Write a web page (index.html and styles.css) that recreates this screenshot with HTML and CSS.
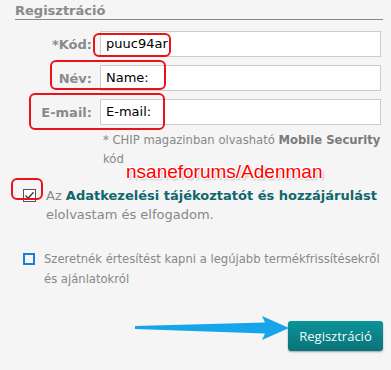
FILE: index.html
```html
<!DOCTYPE html>
<html lang="hu">
<head>
<meta charset="utf-8">
<link rel="stylesheet" href="styles.css">
</head>
<body>
<div class="panel">
  <h2 class="title">Regisztráció</h2>
  <div class="fields">
    <label class="lbl">*Kód:</label>
    <div class="inp">puuc94ar</div>
    <label class="lbl">Név:</label>
    <div class="inp">Name:</div>
    <label class="lbl">E-mail:</label>
    <div class="inp">E-mail:</div>
  </div>
  <p class="note">* CHIP magazinban olvasható <b>Mobile Security</b> kód</p>
  <div class="check first">
    <span class="box checked"><svg width="11" height="11" viewBox="0 0 11 11"><path d="M1.5 5.5 L4.2 8.2 L9.5 2.2" fill="none" stroke="#333" stroke-width="1.3"/></svg></span>
    <p>Az <b class="link">Adatkezelési tájékoztatót és hozzájárulást</b> elolvastam és elfogadom.</p>
  </div>
  <div class="check second">
    <span class="box blue"></span>
    <p>Szeretnék értesítést kapni a legújabb termékfrissítésekről és ajánlatokról</p>
  </div>
  <div class="actions">
    <button class="btn">Regisztráció</button>
  </div>

  <span class="mark m-kod"></span>
  <span class="mark m-nev"></span>
  <span class="mark m-email"></span>
  <span class="mark m-check"></span>
  <span class="watermark">nsaneforums/Adenman</span>
  <svg class="arrow" width="160" height="30" viewBox="0 0 160 30">
    <path d="M0 11 L130 7.5 L127 1 L154 13 L127 25 L130 18.5 L0 14 Z" fill="#16a5e8"/>
  </svg>
</div>
</body>
</html>
```
FILE: styles.css
```css
html, body {
  margin: 0;
  padding: 0;
  background: #f5f5f5;
}
body {
  width: 391px;
  height: 370px;
  overflow: hidden;
  font-family: "DejaVu Sans", Verdana, sans-serif;
}
.panel {
  position: relative;
  padding: 3px 8px 0 15px;
}
.title {
  margin: 0;
  width: 368px;
  font-size: 13px;
  font-weight: bold;
  color: #8a8a8a;
  line-height: 16px;
  padding-bottom: 0;
  border-bottom: 1px solid #8a8a8a;
}
.fields {
  display: grid;
  grid-template-columns: 77px 281px;
  column-gap: 8px;
  row-gap: 8px;
  margin-top: 11px;
  align-items: center;
}
.lbl {
  text-align: right;
  font-size: 13px;
  font-weight: bold;
  color: #8a8a8a;
}
.inp {
  box-sizing: border-box;
  height: 26px;
  border: 1px solid #cccccc;
  background: #fff;
  font-size: 13px;
  color: #000;
  padding: 0 5px;
  line-height: 24px;
}
.note {
  margin: 6px 0 0 88px;
  font-size: 11.6px;
  line-height: 19px;
  color: #888;
  width: 290px;
}
.note b { color: #7a7a7a; }
.check {
  display: flex;
  align-items: flex-start;
  color: #888;
}
.check p { margin: 0; }
.first { margin-top: 17px; margin-left: 8px; }
.first p {
  font-size: 13px;
  line-height: 19px;
  margin-left: 10px;
  width: 340px;
}
.link { color: #11666e; }
.second { margin-top: 25px; margin-left: 8px; }
.second p {
  flex: none;
  font-size: 11.6px;
  line-height: 20px;
  margin-left: 9px;
  width: 345px;
}
.box {
  box-sizing: border-box;
  flex: none;
  width: 13px;
  height: 13px;
  margin-top: 3px;
  display: flex;
  align-items: center;
  justify-content: center;
}
.checked { border: 1px solid #555; background: #fff; }
.blue { border: 2px solid #1b7fd4; width: 12px; height: 12px; margin-top: 4px; }
.actions {
  display: flex;
  justify-content: flex-end;
  margin-top: 32px;
  width: 368px;
}
.btn {
  width: 95px;
  height: 30px;
  border: none;
  border-radius: 3px;
  background: linear-gradient(#0b9499, #0a7379);
  color: #f2fbfb;
  font-family: "Open Sans", sans-serif;
  font-size: 13px;
  box-shadow: 0 1px 2px rgba(0,0,0,0.35);
  padding: 0;
}
.mark {
  position: absolute;
  border: 2px solid #e8141a;
  border-radius: 6px;
  box-sizing: border-box;
}
.m-kod { left: 93px; top: 33px; width: 78px; height: 24px; }
.m-nev { left: 50px; top: 60px; width: 116px; height: 30px; }
.m-email { left: 29px; top: 93px; width: 136px; height: 37px; }
.m-check { left: 11px; top: 178px; width: 32px; height: 22px; }
.watermark {
  position: absolute;
  left: 126px;
  top: 161px;
  font-family: "Liberation Sans", Arial, sans-serif;
  font-size: 19px;
  color: #ff0000;
  text-shadow: 1px 1px 1px #fff, -1px -1px 1px #fff, 1px -1px 1px #fff, -1px 1px 1px #fff, 2px 2px 2px rgba(0,0,0,0.25);
}
.arrow {
  position: absolute;
  left: 135px;
  top: 315px;
}
```
